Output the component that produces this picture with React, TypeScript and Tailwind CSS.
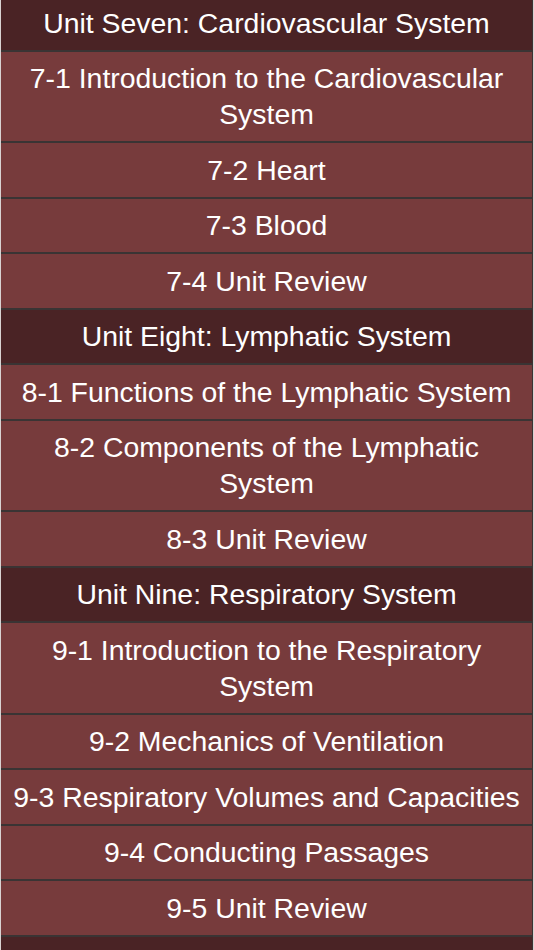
import React from "react";

type Row = { text: string; header?: boolean };

const rows: Row[] = [
  { text: "Unit Seven: Cardiovascular System", header: true },
  { text: "7-1 Introduction to the Cardiovascular System" },
  { text: "7-2 Heart" },
  { text: "7-3 Blood" },
  { text: "7-4 Unit Review" },
  { text: "Unit Eight: Lymphatic System", header: true },
  { text: "8-1 Functions of the Lymphatic System" },
  { text: "8-2 Components of the Lymphatic System" },
  { text: "8-3 Unit Review" },
  { text: "Unit Nine: Respiratory System", header: true },
  { text: "9-1 Introduction to the Respiratory System" },
  { text: "9-2 Mechanics of Ventilation" },
  { text: "9-3 Respiratory Volumes and Capacities" },
  { text: "9-4 Conducting Passages" },
  { text: "9-5 Unit Review" },
];

export default function App() {
  return (
    <div className="w-[534px] h-[950px] overflow-hidden bg-[#d9d2d2]">
      <div
        className="-mt-[4px] ml-[1px] w-[532px] flex flex-col"
        style={{ fontFamily: '"Liberation Sans", Arial, sans-serif' }}
      >
        {rows.map((r, i) => (
          <div
            key={i}
            className={
              r.header
                ? "bg-[#4a2325] border-b-2 border-r border-[#3a3434] px-2 py-[8.75px] text-center text-white text-[28.4px] leading-[36px]"
                : "bg-[#773b3c] border-b-2 border-r border-[#3a3434] px-2 py-[8.75px] text-center text-white text-[28.4px] leading-[36px]"
            }
          >
            {r.text}
          </div>
        ))}
        <div className="bg-[#4a2325] border-r border-[#3a3434] h-[54px]" />
      </div>
    </div>
  );
}
